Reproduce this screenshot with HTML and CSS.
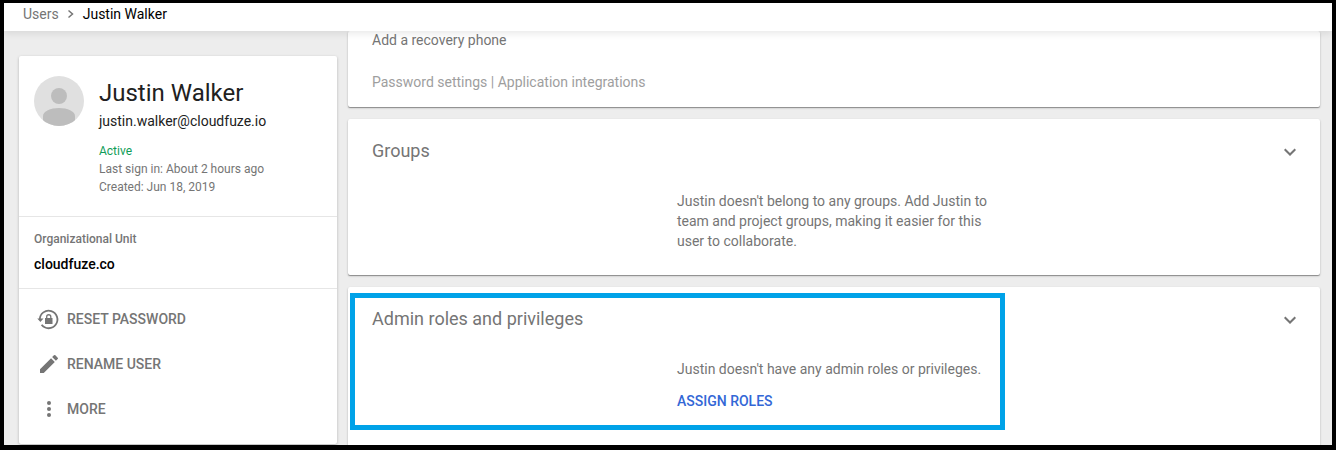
FILE: index.html
```html
<!DOCTYPE html>
<html lang="en">
<head>
    <meta charset="UTF-8">
    <meta name="viewport" content="width=device-width, initial-scale=1.0">
    <title>Justin Walker - Users</title>
    <link rel="stylesheet" href="styles.css">
</head>
<body>
    <nav class="breadcrumbs">
        <a href="#users">Users</a>
        <svg width="8" height="10" viewBox="0 0 8 10"><path d="M1.5 1.5 5.5 5l-4 3.5" fill="none" stroke="#757575" stroke-width="1.5"/></svg>
        <span class="current">Justin Walker</span>
    </nav>

    <div class="content">
        <aside class="card sidebar">
            <div class="profile">
                <svg class="avatar" viewBox="0 0 50 50">
                    <clipPath id="avatarClip"><circle cx="25" cy="25" r="25"/></clipPath>
                    <circle cx="25" cy="25" r="25" fill="#e0e0e0"/>
                    <g fill="#bdbdbd" clip-path="url(#avatarClip)">
                        <circle cx="25" cy="20" r="8"/>
                        <path d="M9 50V40c0-4.500 7.500-8 16-8s16 3.500 16 8v10z"/>
                    </g>
                </svg>
                <div>
                    <h1 class="name">Justin Walker</h1>
                    <div class="email">justin.walker@cloudfuze.io</div>
                    <div class="details">
                        <div class="active">Active</div>
                        <div>Last sign in: About 2 hours ago</div>
                        <div>Created: Jun 18, 2019</div>
                    </div>
                </div>
            </div>
            <div class="unit">
                <div class="unit-label">Organizational Unit</div>
                <div class="unit-name">cloudfuze.co</div>
            </div>
            <div class="actions">
                <button class="action">
                    <svg width="24" height="24" viewBox="0 0 24 24" fill="#757575">
                        <path d="M2.800 12.500A8.800 8.800 0 1 1 4.600 17.800" fill="none" stroke="#757575" stroke-width="1.800"/>
                        <path d="M.300 11.500h6.200L3.400 15zM8 11h7.500v6H8z"/>
                        <path d="M9.700 11.500V9.800a2.050 2.050 0 0 1 4.100 0v1.700" fill="none" stroke="#757575" stroke-width="1.300"/>
                    </svg>
                    RESET PASSWORD
                </button>
                <button class="action">
                    <svg width="24" height="24" viewBox="0 0 24 24" fill="#757575">
                        <path d="M3 17.250V21h3.750L17.810 9.940l-3.750-3.750L3 17.250zM20.710 7.040a1 1 0 0 0 0-1.410l-2.340-2.340a1 1 0 0 0-1.410 0l-1.830 1.830 3.750 3.750 1.830-1.830z"/>
                    </svg>
                    RENAME USER
                </button>
                <button class="action">
                    <svg width="24" height="24" viewBox="0 0 24 24" fill="#757575">
                        <circle cx="12" cy="6" r="2"/><circle cx="12" cy="12" r="2"/><circle cx="12" cy="18" r="2"/>
                    </svg>
                    MORE
                </button>
            </div>
        </aside>

        <main class="main">
            <section class="card security">
                <div>Add a recovery phone</div>
                <div class="settings">Password settings | Application integrations</div>
            </section>

            <section class="card panel">
                <div class="panel-header">
                    <h2>Groups</h2>
                    <button class="expand" aria-label="Expand Groups">
                        <svg width="12" height="8" viewBox="0 0 12 8"><path d="M.700 1.300 6 6.500l5.300-5.200" fill="none" stroke="#757575" stroke-width="2"/></svg>
                    </button>
                </div>
                <div class="panel-text">Justin doesn't belong to any groups. Add Justin to team and project groups, making it easier for this user to collaborate.</div>
            </section>

            <section class="card panel">
                <div class="panel-header">
                    <h2>Admin roles and privileges</h2>
                    <button class="expand" aria-label="Expand Admin roles and privileges">
                        <svg width="12" height="8" viewBox="0 0 12 8"><path d="M.700 1.300 6 6.500l5.300-5.200" fill="none" stroke="#757575" stroke-width="2"/></svg>
                    </button>
                </div>
                <div class="panel-text">
                    <div>Justin doesn't have any admin roles or privileges.</div>
                    <button class="assign">ASSIGN ROLES</button>
                </div>
                <div class="highlight"></div>
            </section>
        </main>
    </div>
</body>
</html>
```
FILE: styles.css
```css
* {
    box-sizing: border-box;
}

body {
    margin: 0;
    height: 100vh;
    display: flex;
    flex-direction: column;
    overflow: hidden;
    border: 4px solid #000;
    border-top-width: 3px;
    border-bottom-width: 5px;
    background: #ededed;
    color: #757575;
    font-family: Roboto, sans-serif;
    font-size: 14px;
    line-height: 20px;
}

button {
    padding: 0;
    border: none;
    background: none;
    color: inherit;
    font: inherit;
    cursor: pointer;
}

h1, h2 {
    margin: 0;
    font-weight: 400;
}

svg {
    display: block;
    flex-shrink: 0;
}

.breadcrumbs {
    display: flex;
    align-items: center;
    gap: 8px;
    flex-shrink: 0;
    padding: 0 19px 6px;
    background: #fff;
    line-height: 22px;
    position: relative;
    z-index: 1;
    box-shadow: 0 2px 8px rgba(0, 0, 0, 0.1);
}

.breadcrumbs a {
    color: #757575;
    text-decoration: none;
}

.current {
    color: #000;
}

.content {
    display: flex;
    align-items: flex-start;
    gap: 11px;
    flex: 1;
    min-height: 0;
    overflow: hidden;
    padding: 0 12px 0 15px;
}

.card {
    background: #fff;
    border-radius: 2px;
    box-shadow: 0 1px 3px rgba(0, 0, 0, 0.25);
}

.sidebar {
    width: 318px;
    flex-shrink: 0;
    margin-top: 25px;
}

.profile {
    display: flex;
    gap: 15px;
    padding: 20px 15px;
    border-bottom: 1px solid #e6e6e6;
}

.avatar {
    width: 50px;
    height: 50px;
}

.name {
    color: #212121;
    font-size: 24px;
    line-height: 34px;
}

.email {
    color: #212121;
    line-height: 22px;
}

.details {
    margin-top: 10px;
    font-size: 12px;
    line-height: 18px;
}

.active {
    color: #0f9d58;
}

.unit {
    padding: 13px 15px 14px;
    border-bottom: 1px solid #e6e6e6;
}

.unit-label {
    font-size: 12px;
    font-weight: 500;
    line-height: 18px;
}

.unit-name {
    margin-top: 6px;
    color: #000;
    font-weight: 500;
}

.actions {
    display: flex;
    flex-direction: column;
    padding: 7px 18px 13px;
}

.action {
    display: flex;
    align-items: center;
    gap: 6px;
    height: 45px;
    font-weight: 500;
}

.main {
    flex: 1;
    min-width: 0;
    display: flex;
    flex-direction: column;
    gap: 12px;
}

.main .card {
    box-shadow: 0 1px 2px rgba(0, 0, 0, 0.3), 0 1px 0 rgba(0, 0, 0, 0.2);
}

.security {
    padding: 0 24px 16px;
    line-height: 18px;
}

.settings {
    margin-top: 24px;
    color: #9e9e9e;
}

.panel {
    position: relative;
    padding: 20px 24px 24px;
}

.panel:last-child {
    padding-bottom: 40px;
}

.panel-header {
    display: flex;
    align-items: center;
    justify-content: space-between;
}

.panel-header h2 {
    font-size: 18px;
    line-height: 24px;
}

.expand {
    padding-top: 2px;
}

.panel-text {
    max-width: 314px;
    margin: 28px auto 0;
}

.assign {
    display: block;
    margin-top: 12px;
    color: #3367d6;
    font-weight: 500;
}

/* call-out box over the admin roles section */
.highlight {
    position: absolute;
    top: 6px;
    left: 2px;
    width: 655px;
    height: 137px;
    border: 5px solid #00a2e8;
    pointer-events: none;
}
```
